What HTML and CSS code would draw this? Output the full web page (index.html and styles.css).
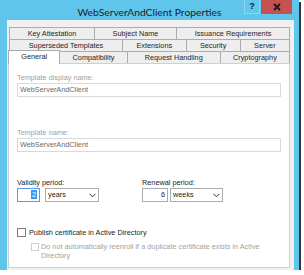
FILE: index.html
```html
<!DOCTYPE html>
<html lang="en">
<head>
    <meta charset="UTF-8">
    <title>WebServerAndClient Properties</title>
    <link rel="stylesheet" href="styles.css">
</head>
<body>
    <div class="window">
        <div class="titlebar">
            <span></span>
            <span class="title">WebServerAndClient Properties</span>
            <div class="caption-buttons">
                <div class="btn-help">?</div>
                <div class="btn-close">
                    <svg width="8" height="8" viewBox="0 0 8 8"><path d="M1 1 L7 7 M7 1 L1 7" stroke="#1a1a1a" stroke-width="1.8"/></svg>
                </div>
            </div>
        </div>

        <div class="client">
            <div class="tabs">
                <div class="tab-row">
                    <div class="tab">Key Attestation</div>
                    <div class="tab">Subject Name</div>
                    <div class="tab">Issuance Requirements</div>
                </div>
                <div class="tab-row">
                    <div class="tab long">Superseded Templates</div>
                    <div class="tab">Extensions</div>
                    <div class="tab">Security</div>
                    <div class="tab">Server</div>
                </div>
                <div class="tab-row front">
                    <div class="tab active">General</div>
                    <div class="tab">Compatibility</div>
                    <div class="tab long">Request Handling</div>
                    <div class="tab">Cryptography</div>
                </div>
            </div>

            <div class="panel">
                <div class="label disabled first">Template display name:</div>
                <div class="textbox">WebServerAndClient</div>

                <div class="label disabled second">Template name:</div>
                <div class="textbox">WebServerAndClient</div>

                <div class="periods">
                    <div class="period validity">
                        <div class="label">Validity period:</div>
                        <div class="period-controls">
                            <div class="numbox focused"><span class="sel">2</span></div>
                            <div class="dropdown wide">years
                                <svg width="7" height="5" viewBox="0 0 7 5"><path d="M0.5 0.8 L3.5 3.8 L6.5 0.8" fill="none" stroke="#333" stroke-width="1"/></svg>
                            </div>
                        </div>
                    </div>
                    <div class="period renewal">
                        <div class="label">Renewal period:</div>
                        <div class="period-controls">
                            <div class="numbox">6</div>
                            <div class="dropdown">weeks
                                <svg width="7" height="5" viewBox="0 0 7 5"><path d="M0.5 0.8 L3.5 3.8 L6.5 0.8" fill="none" stroke="#333" stroke-width="1"/></svg>
                            </div>
                        </div>
                    </div>
                </div>

                <div class="check publish">
                    <span class="box"></span>
                    <span>Publish certificate in Active Directory</span>
                </div>
                <div class="check sub disabled">
                    <span class="box"></span>
                    <span class="check-text">Do not automatically reenroll if a duplicate certificate exists in Active Directory</span>
                </div>
            </div>
        </div>
    </div>
</body>
</html>
```

FILE: styles.css
```css
body {
    margin: 0;
    background-color: #ffffff;
    font-family: 'Liberation Sans', Arial, sans-serif;
    font-size: 7.3px;
    color: #1e1e1e;
}

.window {
    width: 299px;
    height: 270px;
    background-color: #5fc5ea;
    box-shadow: 2px 2px 0 #363636;
    display: flex;
    flex-direction: column;
}

/* title bar */
.titlebar {
    height: 20px;
    display: grid;
    grid-template-columns: 1fr auto 1fr;
}
.title {
    font-family: 'Lato', sans-serif;
    font-size: 10.3px;
    color: #1f1f1f;
    line-height: 20px;
    padding-top: 2px;
    white-space: nowrap;
}
.caption-buttons {
    justify-self: end;
    display: flex;
    height: 14px;
    margin-right: 7px;
}
.btn-help {
    width: 14px;
    height: 13px;
    border: 1px solid #8fd5ef;
    border-top: none;
    background-color: #62c7eb;
    font-family: 'Liberation Sans', sans-serif;
    font-weight: bold;
    font-size: 9px;
    line-height: 13px;
    text-align: center;
    color: #1a1a1a;
}
.btn-close {
    width: 31px;
    height: 14px;
    margin-left: 1px;
    background-color: #c75050;
    display: flex;
    align-items: center;
    justify-content: center;
}

/* client area */
.client {
    flex: 1;
    margin: 0 5px 0 7px;
    padding: 7px 4px 2px 1px;
    background-color: #f0f0f0;
    display: flex;
    flex-direction: column;
}

.tabs {
    padding-left: 1px;
}
.tab-row {
    display: flex;
    height: 12px;
}
.tab-row.front {
    margin-left: -1px;
}
.tab {
    flex: 1 1 auto;
    text-align: center;
    line-height: 11px;
    white-space: nowrap;
    background-color: #eeeeee;
    border: 1px solid #acacac;
    border-bottom: none;
    margin-left: -1px;
}
.tab:first-child {
    margin-left: 0;
}
.tab.long {
    flex-grow: 1.4;
}
.tab.active {
    position: relative;
    z-index: 1;
    background-color: #ffffff;
    margin-top: -1px;
    height: 13px;
    line-height: 12px;
}

.panel {
    flex: 1;
    background-color: #ffffff;
    border: 1px solid #cfcfcf;
    padding: 0 8px;
}

.label {
    line-height: 9px;
    white-space: nowrap;
}
.label.disabled {
    color: #a2a2a2;
}
.label.first {
    margin-top: 9px;
}
.label.second {
    margin-top: 31px;
}

.textbox {
    margin-top: 1px;
    height: 12px;
    line-height: 12px;
    border: 1px solid #d9d9d9;
    padding-left: 2px;
    color: #6a6a6a;
}

/* validity / renewal */
.periods {
    display: flex;
    margin-top: 26px;
}
.period.validity {
    width: 125px;
}
.period-controls {
    display: flex;
    margin-top: 1px;
}
.numbox {
    width: 23px;
    height: 12px;
    border: 1px solid #acacac;
    text-align: right;
    line-height: 12px;
    padding-right: 2px;
    box-sizing: content-box;
}
.renewal .numbox {
    width: 22px;
}
.numbox.focused {
    width: 19px;
    border-color: #569de5;
    margin-right: 5px;
}
.sel {
    background-color: #3399ff;
    color: #ffffff;
    padding: 0 1px;
}
.dropdown {
    width: 47px;
    height: 12px;
    border: 1px solid #acacac;
    margin-left: 2px;
    padding: 0 2px;
    line-height: 12px;
    display: flex;
    justify-content: space-between;
    align-items: center;
}
.dropdown.wide {
    width: 48px;
    margin-left: 0;
}

/* checkboxes */
.check {
    display: flex;
    align-items: flex-start;
    line-height: 9px;
}
.check .box {
    flex: none;
    width: 7px;
    height: 7px;
    border: 1px solid #7a7a7a;
    background-color: #ffffff;
    margin-right: 3px;
}
.check.publish {
    margin-top: 26px;
}
.check.sub {
    margin-top: 5px;
    padding-left: 14px;
    color: #a2a2a2;
}
.check.sub .box {
    width: 6px;
    height: 6px;
    border-color: #cfcfcf;
    margin-top: 1px;
    margin-right: 2px;
}
.check-text {
    width: 235px;
}
```
